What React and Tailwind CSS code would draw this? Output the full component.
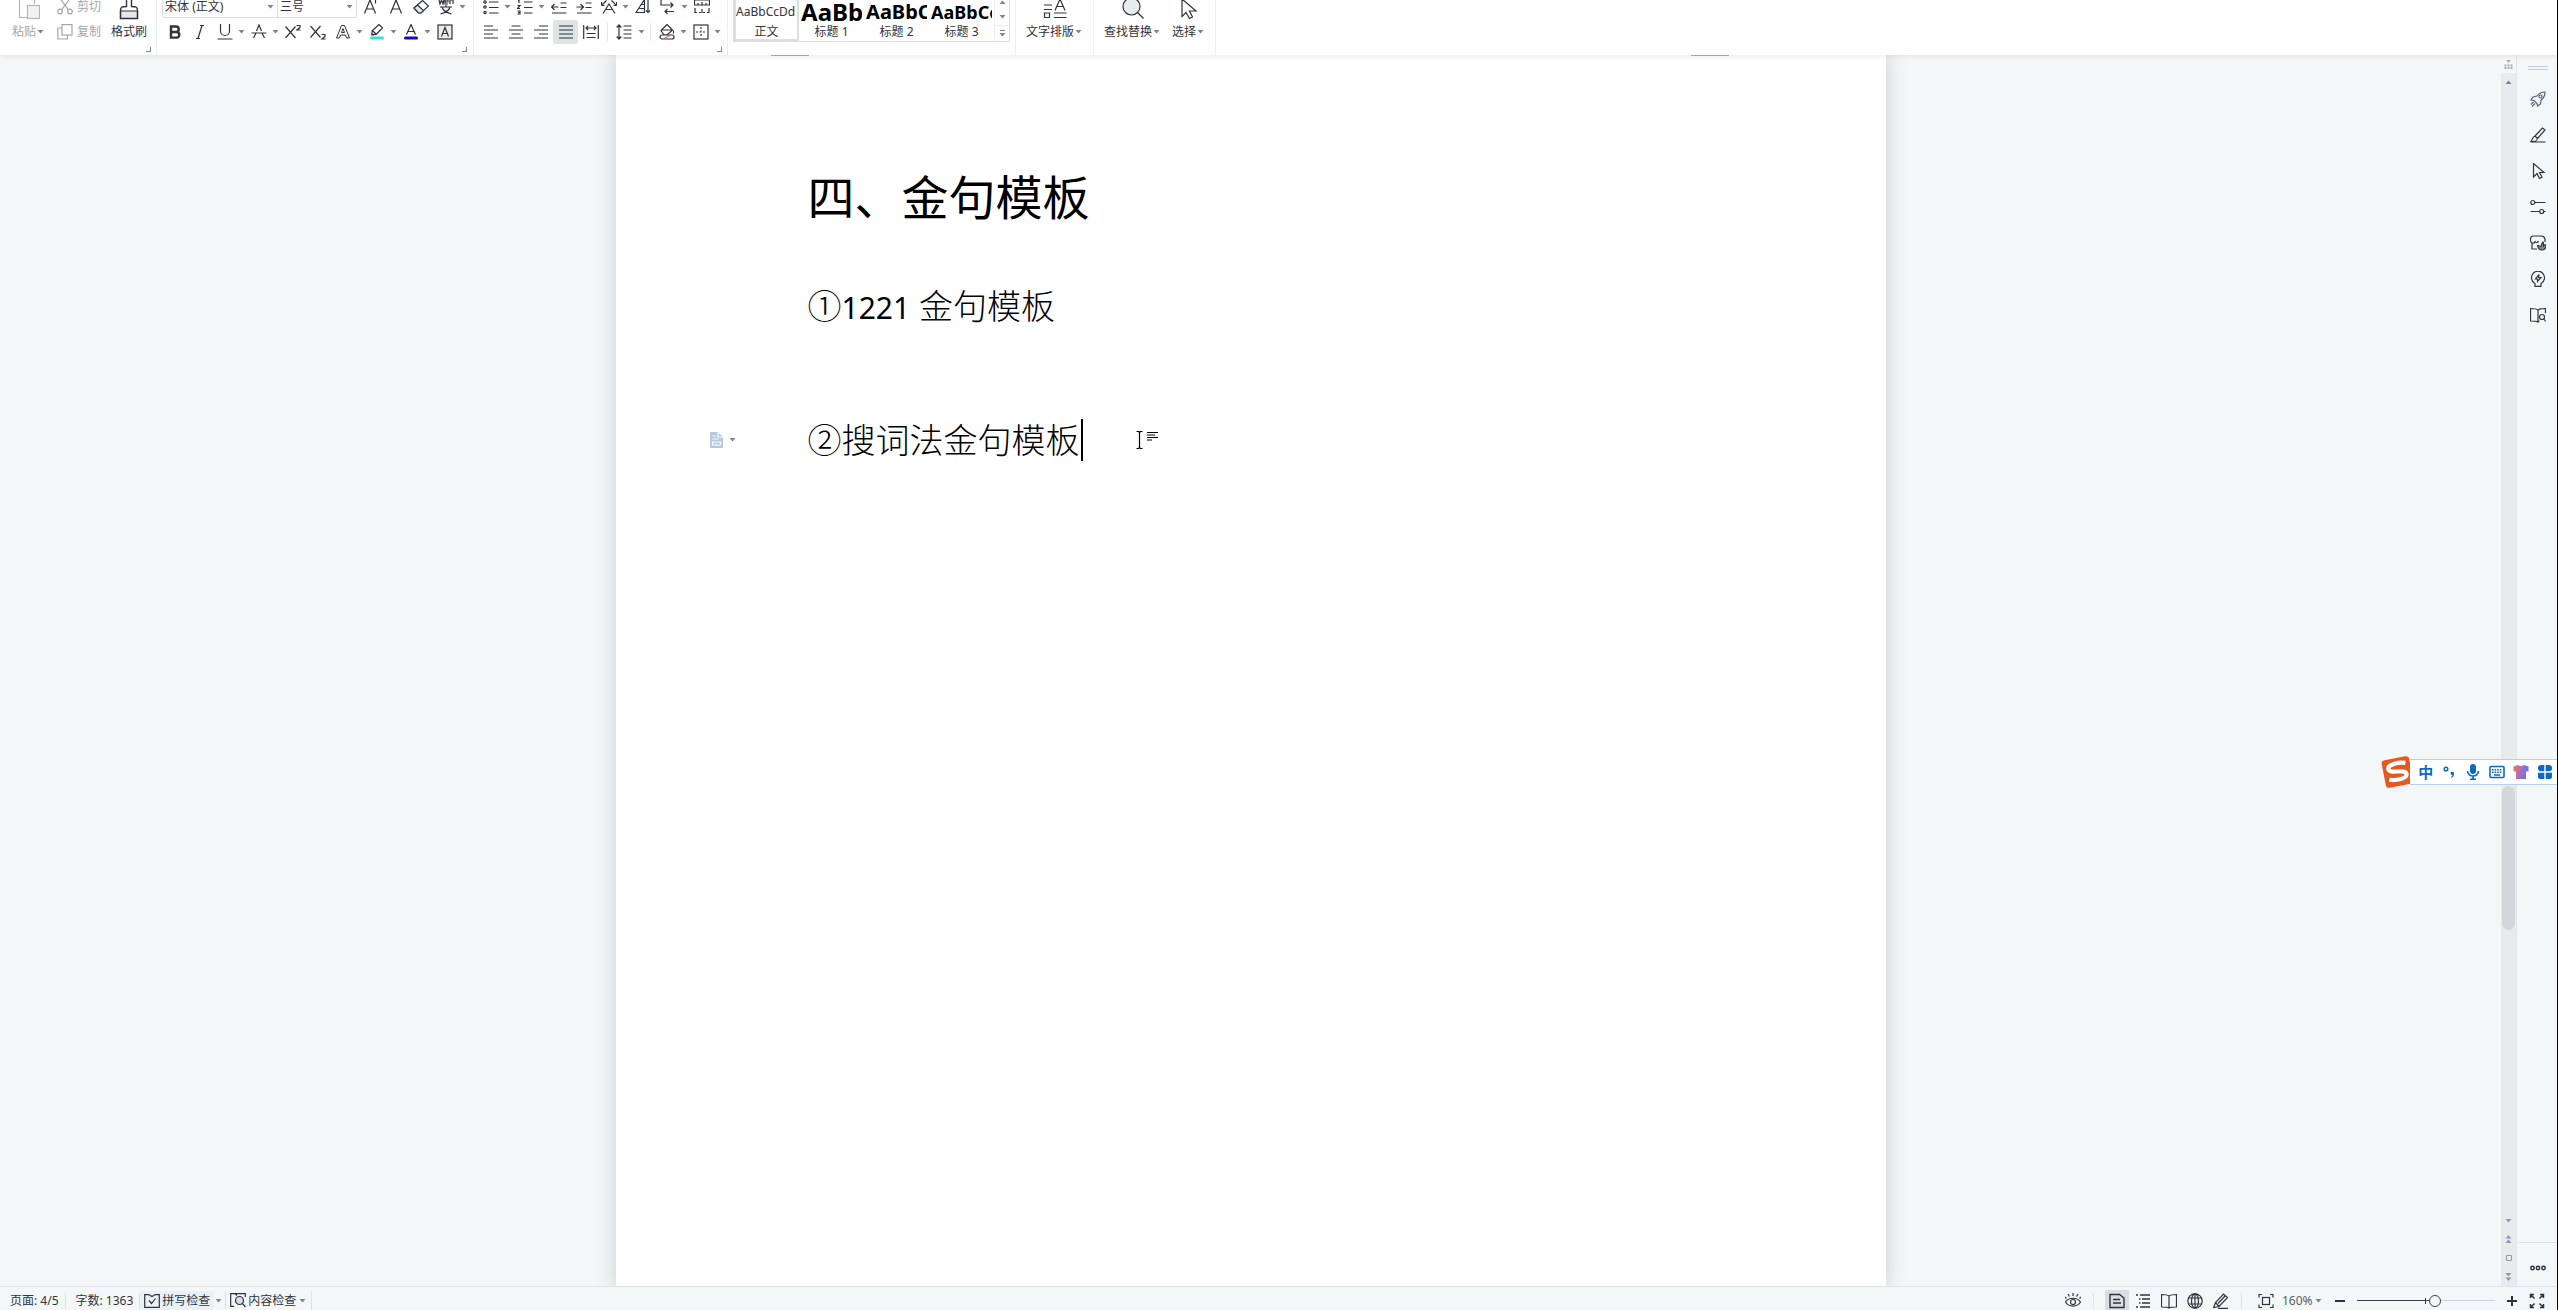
import { useState } from "react";

const INK = "#2f333d";

function Icon({ w = 16, h = 16, color = INK, children, className = "" }) {
  return (
    <svg
      width={w}
      height={h}
      viewBox={`0 0 ${w} ${h}`}
      fill="none"
      stroke={color}
      strokeWidth="1.2"
      className={`shrink-0 ${className}`}
      aria-hidden="true"
    >
      {children}
    </svg>
  );
}

function Caret({ className = "" }) {
  return (
    <svg width="9" height="4" viewBox="0 0 9 4" fill="#7d8390" className={`shrink-0 ${className}`} aria-hidden="true">
      <path d="M1.5 0h6l-3 3.5z" />
    </svg>
  );
}

/* Small ribbon button: icon cell, with a caret when it opens a menu */
function Tool({ label, menu, active, children }) {
  return (
    <button type="button" title={label} aria-label={label} className="flex h-[25px] shrink-0 items-center">
      <span className={`flex h-6 w-[25px] items-center justify-center rounded-xs ${active ? "bg-[#dfe4e7]" : ""}`}>
        {children}
      </span>
      {menu && <Caret />}
    </button>
  );
}

function BigTool({ label, menu, muted, children }) {
  return (
    <button type="button" className="flex shrink-0 flex-col items-center gap-1 pb-1">
      {children}
      <span className={`flex items-center text-xs leading-4 whitespace-nowrap ${muted ? "text-[#a3a7ae]" : ""}`}>
        {label}
        {menu && <Caret />}
      </span>
    </button>
  );
}

function Group({ launcher, className = "", children }) {
  return (
    <div className={`flex shrink-0 flex-col justify-end border-r border-[#eceff1] ${className}`}>
      <div className="flex h-[50px] items-end">{children}</div>
      <div className="flex h-[11px] items-start justify-end pt-[3px]">
        {launcher && <button type="button" aria-label="更多设置" className="size-[5px] border-r border-b border-[#7d8390]" />}
      </div>
    </div>
  );
}

function Divider() {
  return <span className="mx-1 h-[18px] w-px bg-[#e3e6e9]" />;
}

function ClipboardGroup() {
  return (
    <Group launcher className="pr-[5px] pl-3">
      <BigTool label="粘贴" menu muted>
        <Icon w={22} h={24} color="#b3b6bb">
          <path d="M9 21.5H1.5V3.5H16.5V8" />
          <rect x="9.5" y="9.5" width="12" height="13" fill="#f1f2f3" />
        </Icon>
      </BigTool>
      <div className="ml-[7px] flex flex-col text-xs text-[#a3a7ae]">
        <button type="button" className="flex h-[25px] items-center">
          <span className="flex w-[25px] justify-center">
            <Icon color="#a3a7ae">
              <circle cx="3" cy="12.5" r="2.3" />
              <circle cx="13" cy="12.5" r="2.3" />
              <path d="M4.5 10.8 12 1M11.5 10.8 4 1" />
            </Icon>
          </span>
          剪切
        </button>
        <button type="button" className="flex h-[25px] items-center">
          <span className="flex w-[25px] justify-center">
            <Icon color="#a3a7ae">
              <rect x="5" y=".6" width="10" height="10.5" />
              <path d="M5 4H.8V15H10.5V11" />
            </Icon>
          </span>
          复制
        </button>
      </div>
      <div className="mr-1 pl-[10px]">
        <BigTool label="格式刷">
          <Icon w={20} h={24}>
            <path d="M1.5 15h17v7.5h-17z" fill="#e6e9ec" />
            <path d="M1.5 15c0-4 1-4.5 6-4.5V1h5v9.500c5 0 6 .5 6 4.500v7.500h-17z" strokeWidth="1.4" />
          </Icon>
        </BigTool>
      </div>
    </Group>
  );
}

function FontGroup() {
  const [font, setFont] = useState("宋体 (正文)");
  const [size, setSize] = useState("三号");

  return (
    <Group launcher className="pr-[6px] pl-[5px]">
      <div className="flex flex-col">
        <div className="flex h-[25px] items-center">
          <div className="mr-px flex h-[22px] rounded-xs border border-[#dcdfe2] text-xs">
            <label className="relative flex w-[115px] items-center border-r border-[#dcdfe2]">
              <select
                aria-label="字体"
                value={font}
                onChange={(e) => setFont(e.target.value)}
                className="w-full appearance-none bg-transparent pl-0.5 leading-5 outline-none"
              >
                <option>宋体 (正文)</option>
                <option>黑体</option>
              </select>
              <Caret className="absolute right-0.5" />
            </label>
            <label className="relative flex w-[78px] items-center">
              <select
                aria-label="字号"
                value={size}
                onChange={(e) => setSize(e.target.value)}
                className="w-full appearance-none bg-transparent pl-0.5 leading-5 outline-none"
              >
                <option>三号</option>
                <option>四号</option>
              </select>
              <Caret className="absolute right-0.5" />
            </label>
          </div>
          <Tool label="增大字号">
            <Icon>
              <path d="M1.5 14.5 7 1l5.5 13.500M3.500 10h7M12.500 1v3.500" />
            </Icon>
          </Tool>
          <Tool label="减小字号">
            <Icon>
              <path d="M2.5 14.5 8 1l5.5 13.500M4.500 10h7" />
            </Icon>
          </Tool>
          <Tool label="清除格式">
            <Icon>
              <path d="m1 9 8.5-7.5 6 5.5L8 14H5.5z" />
              <path d="m4.5 6 6 5.5L8 14H5.5L1 9z" fill="#e3e6e9" />
            </Icon>
          </Tool>
          <Tool label="拼音指南" menu>
            <Icon>
              <path d="m1 1 1 4 1.5-4L5 5l1-4M7 3h3V1H7v4h3M12 5V1h3v4M2 8h12M8 6v2M12 8c-1 4-4 5.500-9.500 7M4 8c1 4 4 5.500 9.500 7" />
            </Icon>
          </Tool>
        </div>
        <div className="flex h-[25px] items-center">
          <Tool label="加粗">
            <Icon>
              <path d="M4 2.5h5a2.700 2.700 0 0 1 0 5.500H4zM4 8h5.500a2.800 2.800 0 0 1 0 5.600H4z" strokeWidth="2.4" />
            </Icon>
          </Tool>
          <Tool label="倾斜">
            <Icon>
              <path d="M8 1.5h4M4 14.5h4M10 1.5 6 14.5" />
            </Icon>
          </Tool>
          <Tool label="下划线" menu>
            <Icon>
              <path d="M3.5 0v7a4.500 4.500 0 0 0 9 0V0M.5 15h15" />
            </Icon>
          </Tool>
          <Tool label="删除线" menu>
            <Icon>
              <path d="M2.5 14 5 9M13.5 14 11 9M5.500 7 8 1l2.500 6M.5 9h15" />
            </Icon>
          </Tool>
          <Tool label="上标">
            <Icon>
              <path d="m.5 2.5 10 11.500M10.500 2.500.5 14M11.500 1.500h3.500v2l-3 2.500h3.500" />
            </Icon>
          </Tool>
          <Tool label="下标">
            <Icon>
              <path d="m.5 2 10 11.500M10.500 2 .5 13.500M11.500 10.500h3.500v2l-3 2.500h3.500" />
            </Icon>
          </Tool>
          <Tool label="文字效果" menu>
            <Icon>
              <path d="M1.5 14 6.500 1.500h3l5 12.500h-3l-1-3h-5l-1 3zM6.500 8.500 8 4.500l1.500 4z" strokeWidth="1" />
            </Icon>
          </Tool>
          <Tool label="突出显示" menu>
            <Icon>
              <path d="M3 10V7l7-6.500L13.500 4 7 10.500zM4 7l3 3M2 11h3" />
              <path d="M2.500 14h11" stroke="#2ce5e2" strokeWidth="3" strokeLinecap="round" />
            </Icon>
          </Tool>
          <Tool label="字体颜色" menu>
            <Icon>
              <path d="M3.500 10.500 8 .5l4.500 10M5 7.500h6" />
              <path d="M2.500 14h11" stroke="#1507cf" strokeWidth="3" strokeLinecap="round" />
            </Icon>
          </Tool>
          <Tool label="字符底纹">
            <Icon>
              <rect x="1" y="1" width="14" height="14" fill="#e9ebed" />
              <path d="M4.500 12.500 8 3.500l3.500 9M5.500 9.500h5" />
            </Icon>
          </Tool>
        </div>
      </div>
    </Group>
  );
}

function ParagraphGroup() {
  return (
    <Group launcher className="pr-[5px] pl-1">
      <div className="flex w-[244px] flex-col">
        <div className="flex h-[25px] items-center">
          <Tool label="项目符号" menu>
            <Icon>
              <circle cx="2" cy="3" r="1.200" />
              <circle cx="2" cy="8" r="1.200" />
              <circle cx="2" cy="13.500" r="1.200" />
              <path d="M6 3h9.500M6 8.500h9.500M6 14h9.500" />
            </Icon>
          </Tool>
          <Tool label="编号" menu>
            <Icon>
              <path d="M1 1.500h1V4M.5 6.500h2.500L.5 9.500H3M.5 12h2.500v3H.5M1 13.500h2M7 3h8.500M7 8.500h8.500M7 14h8.500" />
            </Icon>
          </Tool>
          <Tool label="减少缩进量">
            <Icon>
              <path d="M.5 8h7M3.500 5 .5 8l3 3M9.500 4h6M9.500 8.500h6M1 14h14.500" />
            </Icon>
          </Tool>
          <Tool label="增加缩进量">
            <Icon>
              <path d="M.5 8h7M4.500 5l3 3-3 3M9.500 4h6M9.500 8.500h6M1 14h14.500" />
            </Icon>
          </Tool>
          <Tool label="中文版式" menu>
            <Icon>
              <path d="M.5 6.500V3M.5 6.500h3M15.500 6.500V3M15.500 6.500h-3M.5 6.500l5-5M15.500 6.500l-5-5M2 14.500 8 5l6 9.500M5 10.500h6" />
            </Icon>
          </Tool>
          <Tool label="排序">
            <Icon>
              <path d="M1 13.500 9.500.5v13zM4.500 9.500h5M6.500 5.500h3M13 1v12.500M11 11.500l2 2 2-2" />
            </Icon>
          </Tool>
          <Tool label="制表位" menu>
            <Icon>
              <path d="M1 0v6h12M10.500 3.500 13 6l-2.500 2.500M14 12.500H5M7.500 10 5 12.500 7.500 15" />
            </Icon>
          </Tool>
          <Tool label="显示标尺">
            <Icon>
              <path d="M.5 1h15v5H.5zM4 4v2M8 3v3M12 4v2M1 9v5M5 13.500h2M9 13.500h2M15 9v5M8 10v4M1 13.500h2M13 13.500h2" />
            </Icon>
          </Tool>
        </div>
        <div className="flex h-[25px] items-center">
          <Tool label="左对齐">
            <Icon>
              <path d="M1 2h9M1 6h14M1 10h9M1 14h14" />
            </Icon>
          </Tool>
          <Tool label="居中对齐">
            <Icon>
              <path d="M3.500 2h9M1 6h14M3.500 10h9M1 14h14" />
            </Icon>
          </Tool>
          <Tool label="右对齐">
            <Icon>
              <path d="M6 2h9M1 6h14M6 10h9M1 14h14" />
            </Icon>
          </Tool>
          <Tool label="两端对齐" active>
            <Icon>
              <path d="M1 2h14M1 6h14M1 10h14M1 14h14" />
            </Icon>
          </Tool>
          <Tool label="分散对齐">
            <Icon>
              <path d="M.7 1v14M15.300 1v14M3 4h10M5 2 3 4l2 2M11 2l2 2-2 2M3.500 9.500h9M3.500 13.500h9" />
            </Icon>
          </Tool>
          <Divider />
          <Tool label="行距" menu>
            <Icon>
              <path d="M3 1v14M.7 3.500 3 1l2.300 2.500M.7 12.500 3 15l2.300-2.500M7.500 2h8M7.500 6h8M7.500 10h8M7.500 14h8" />
            </Icon>
          </Tool>
          <Divider />
          <Tool label="底纹颜色" menu>
            <Icon>
              <path d="M2 6.500 8 .5l5.500 5.500L8 11H5zM2.500 6h10M14.500 6.500v3" />
              <rect x="1" y="11" width="14" height="4" rx="2" fill="#fff" />
              <path d="m5 14.500 6-3" stroke="#d76a6a" />
            </Icon>
          </Tool>
          <Tool label="边框" menu>
            <Icon>
              <rect x="1" y="1" width="14" height="14" />
              <path d="M8 3v10M3 8h10" strokeDasharray="2 1.500" />
            </Icon>
          </Tool>
        </div>
      </div>
    </Group>
  );
}

const styles = [
  { name: "正文", sample: "AaBbCcDd", look: "text-xs", active: true },
  { name: "标题 1", sample: "AaBb", look: "text-2xl font-bold text-black" },
  { name: "标题 2", sample: "AaBbC", look: "text-xl font-bold text-black" },
  { name: "标题 3", sample: "AaBbCc", look: "text-lg font-bold text-black" },
];

function StylesGroup() {
  return (
    <Group className="pr-[5px] pl-[5px]">
      <div className="mb-0.5 flex h-12 border border-[#dcdfe2]">
        {styles.map((s) => (
          <button
            key={s.name}
            type="button"
            className={`flex w-[65px] flex-col justify-end border-2 ${s.active ? "border-[#dcdfe2]" : "border-transparent"}`}
          >
            <span className={`flex h-6 w-full items-center overflow-hidden leading-6 whitespace-nowrap ${s.look}`}>
              {s.sample}
            </span>
            <span className="h-[15px] w-full text-center text-xs leading-4">{s.name}</span>
          </button>
        ))}
        <div className="flex w-[15px] flex-col border-l border-[#eceff1]">
          <button type="button" aria-label="上一行" className="flex h-[14px] items-center justify-center">
            <Caret className="rotate-180" />
          </button>
          <button type="button" aria-label="下一行" className="flex h-[17px] items-center justify-center">
            <Caret />
          </button>
          <button
            type="button"
            aria-label="展开样式"
            className="flex h-4 flex-col items-center justify-center gap-0.5 border-t border-[#eceff1]"
          >
            <span className="h-px w-[5px] bg-[#7d8390]" />
            <Caret />
          </button>
        </div>
      </div>
    </Group>
  );
}

function Ribbon() {
  return (
    <header className="relative z-10 bg-white shadow-[0_1px_5px_#00000018]">
      <div className="flex h-[55px] items-end overflow-hidden">
        <ClipboardGroup />
        <FontGroup />
        <ParagraphGroup />
        <StylesGroup />
        <Group className="px-[10px]">
          <BigTool label="文字排版" menu>
            <Icon w={24} h={24}>
              <path d="M1 9h8M1 13.500h8M1.500 17h5v4.500h-5zM12 14.500 17 3l5 11.500M14 10.500h6M11 17h12.500M11 21.500h12.500" />
            </Icon>
          </BigTool>
        </Group>
        <Group className="px-[10px]">
          <BigTool label="查找替换" menu>
            <Icon w={24} h={24}>
              <circle cx="10.500" cy="10.500" r="8.500" fill="#e9ebed" />
              <path d="m16.500 16.500 6 6" />
            </Icon>
          </BigTool>
          <div className="pl-[11px]">
            <BigTool label="选择" menu>
              <Icon w={18} h={24}>
                <path d="M2 3v17.500l4-4 3.500 6 3-1.500-3-6H16z" />
              </Icon>
            </BigTool>
          </div>
        </Group>
      </div>
    </header>
  );
}

function Document() {
  return (
    <main className="min-w-0 flex-1 overflow-hidden">
      <article className="relative mx-auto h-full w-[1270px] bg-white pt-[110px] pl-48 text-black shadow-[0_0_18px_2px_#cfd3d5]">
        <div className="absolute inset-x-0 top-0 flex justify-between pr-[157px] pl-[155px]">
          <span className="h-px w-[38px] bg-[#a9adb0]" />
          <span className="h-px w-[38px] bg-[#a9adb0]" />
        </div>
        <h1 className="text-[47px] leading-[64px] font-normal">四、金句模板</h1>
        <p className="mt-[55px] text-[34px] leading-[44px] font-light">
          ①<span className="text-[30px] font-normal">1221</span> 金句模板
        </p>
        <div className="relative mt-[88px] flex items-center text-[34px] leading-[44px] font-light">
          <button type="button" aria-label="段落布局" className="absolute -left-[98px] flex items-center gap-[5px]">
            <Icon w={13} h={16} color="#fff">
              <path d="M0 0h8l5 5v11H0z" fill="#b5c9e3" stroke="none" />
              <path d="M8 0v5h5M2.500 4h3.500M2.500 7h6M2.500 10h8v3h-8z" />
            </Icon>
            <Caret />
          </button>
          <p>②搜词法金句模板</p>
          <span className="ml-px h-[42px] w-0.5 bg-black" />
          <Icon w={22} h={18} color="#000" className="absolute left-[328px]">
            <path d="M.5.5h2l1 1 1-1h2M3.500 1.500v15M.5 17.500h2l1-1 1 1h2M11 1.500h11M11 4h8M11 6.500h11M11 9h5" />
          </Icon>
        </div>
      </article>
    </main>
  );
}

function ScrollBar() {
  return (
    <div className="flex w-[15px] shrink-0 flex-col items-center bg-[#e8ebee]">
      <div className="flex h-[18px] w-full items-center justify-center bg-[#f4f7f8]">
        <Icon w={9} h={9} color="#a9adba">
          <path d="M2 0h5L4.500 3z" fill="#a9adba" stroke="none" />
          <path d="M.5 5.500h8M.5 8h8" strokeWidth="2" strokeDasharray="2 1" />
        </Icon>
      </div>
      <button type="button" aria-label="向上滚动" className="flex h-[18px] items-center">
        <Caret className="rotate-180" />
      </button>
      <div className="flex w-full flex-1 flex-col items-center">
        <div className="flex-[696]" />
        <div className="w-[13px] flex-[144] rounded-full bg-[#d3d7db]" />
        <div className="flex-[281]" />
      </div>
      <div className="flex h-[75px] flex-col items-center gap-3 pt-2">
        <button type="button" aria-label="向下滚动">
          <Icon w={9} h={4}>
            <path d="M1.500 0h6L4.500 3.500z" fill="#9297a6" stroke="none" />
          </Icon>
        </button>
        <button type="button" aria-label="上一页">
          <Icon w={9} h={8}>
            <path d="M1.500 3.500h6L4.500 0zM1.500 8h6L4.500 4.500z" fill="#9297a6" stroke="none" />
          </Icon>
        </button>
        <button type="button" aria-label="选择浏览对象" className="size-1.5 rounded-[1px] border border-[#9297a6]" />
        <button type="button" aria-label="下一页">
          <Icon w={9} h={8}>
            <path d="M1.500 0h6L4.500 3.500zM1.500 4.500h6L4.500 8z" fill="#9297a6" stroke="none" />
          </Icon>
        </button>
      </div>
    </div>
  );
}

const sideTools = [
  {
    label: "快捷工具",
    color: "#59627a",
    art: (
      <>
        <path d="M15 1c-4 0-6 1-8 4L3 6 1 9l3 .5 3 3L7.500 15l3-2 .5-4c3-2 4-4 4-8z" />
        <circle cx="10.500" cy="5.500" r="1.500" />
        <path d="M3.500 11 1 13.500M5 12.500 2 15.500" />
      </>
    ),
  },
  {
    label: "样式和格式",
    art: <path d="m5 9 7.500-8 2.500 2-7.500 8.500M5 9l2.500 2.500C7 14 4 15 1 14.500 2.500 13 2 10 5 9zM.5 15h15" />,
  },
  { label: "选择窗格", art: <path d="M3.500.5v13.500l3.500-3.500 2.500 5 2.500-1.500-2.500-4.500h4.500z" /> },
  {
    label: "属性",
    art: (
      <>
        <circle cx="2.800" cy="3.500" r="2" />
        <path d="M5 3.500h10.500M.5 12.500h9M14 12.500h1.500" />
        <circle cx="11.700" cy="12.500" r="2" />
      </>
    ),
  },
  {
    label: "资源库",
    art: (
      <>
        <path d="M7 14H2V8M2 8C0 7 .5 5 .5 4c0-2 1-3 3-3h8c2 0 3 1 3.500 3v3M2 8c1.500.5 3 0 3-2 0 2 3 2 3.500 0" />
        <path d="M12 15c-3 0-4-2-4.500-4.500 2 0 3 .5 3.500 1.500 0-2 .5-3.500 2-5 1 1.500.5 3 .5 4 1-1 1.500-1.500 2.500-1.500 0 3.500-1.500 5.500-3.500 5.500z" fill="#888c93" />
      </>
    ),
  },
  {
    label: "帮助中心",
    art: <path d="M5 12.500A6.500 6.500 0 1 1 11 12.500V15.300H5zM9 3.500 5.500 8h2v2.500L11 6.500H8.500z" />,
  },
  {
    label: "文档查找",
    art: (
      <>
        <path d="M8 3C6 1.500 3 1.500.5 1.500v12.500c3 0 6 0 7.500 1V3c2-1.500 5-1.500 7.500-1.500V6M8 15c.5-.5 1-1 1.500-1" />
        <circle cx="12" cy="10" r="2.500" />
        <path d="m14 12 1.500 2.500" />
      </>
    ),
  },
];

function SidePanel() {
  return (
    <aside className="flex w-[41px] shrink-0 flex-col items-center border-l border-[#e1e5e8] pl-px">
      <div className="mt-[11px] mb-[11px] h-1 w-5 border-y border-[#c9cdd1]" />
      <nav className="flex flex-col">
        {sideTools.map((tool) => (
          <button
            key={tool.label}
            type="button"
            title={tool.label}
            aria-label={tool.label}
            className="flex size-9 items-center justify-center"
          >
            <Icon color={tool.color}>{tool.art}</Icon>
          </button>
        ))}
      </nav>
      <button
        type="button"
        aria-label="更多"
        className="mt-auto flex h-11 w-full items-center justify-center border-t border-[#dde1e4] pt-1.5"
      >
        <Icon w={16} h={6} className="[stroke-width:1.5]">
          <circle cx="2.500" cy="3" r="1.700" />
          <circle cx="8" cy="3" r="1.700" />
          <circle cx="13.500" cy="3" r="1.700" />
        </Icon>
      </button>
    </aside>
  );
}

/* Floating input method bar */
function ImeBar() {
  return (
    <div className="absolute top-[756px] right-0 z-20 flex items-center">
      <svg width="33" height="32" viewBox="0 0 33 32" aria-hidden="true">
        <g transform="rotate(-11 16.500 16)">
          <rect x="2.500" y="2" width="28" height="28" rx="3.500" fill="#e8571f" />
          <path
            d="M26 8.500C19 6 8 7 8 11.500c0 5.500 17 2.500 17 8 0 5-12 5-18 2.500"
            fill="none"
            stroke="#fff"
            strokeWidth="4.200"
          />
        </g>
      </svg>
      <div className="-ml-1 flex h-[26px] w-[147px] items-center border-y border-[#b9cfe8] bg-white pl-1 text-[#0b69c7]">
        <button type="button" className="w-6 text-center text-[15px] leading-6 font-bold">
          中
        </button>
        <button type="button" aria-label="标点" className="flex w-6 justify-center">
          <Icon w={14} h={14} color="#0b69c7">
            <circle cx="4" cy="4" r="1.800" strokeWidth="1.500" />
            <path d="M8.500 8a1.800 1.800 0 1 1 3.500 1c0 2-1 3-2.500 4l-.5-1c1-.5 1.300-1 1.300-2-1 0-1.800-1-1.800-2z" fill="#0b69c7" stroke="none" />
          </Icon>
        </button>
        <button type="button" aria-label="语音" className="flex w-[25px] justify-center">
          <Icon w={14} h={16} color="#0b69c7">
            <rect x="4" y="0" width="6" height="10" rx="3" fill="#0b69c7" stroke="none" />
            <path d="M1.500 7a5.500 5 0 0 0 11 0M7 12v3M4 15.200h6" strokeWidth="1.600" />
          </Icon>
        </button>
        <button type="button" aria-label="软键盘" className="flex w-6 justify-center">
          <Icon w={16} h={14} color="#0b69c7">
            <rect x="1" y="1.500" width="14" height="11" rx="1" strokeWidth="1.600" />
            <path d="M3 4.800h10M3 7.300h10" strokeWidth="1.500" strokeDasharray="1.600 1" />
            <path d="M5 10h6" strokeWidth="1.500" />
          </Icon>
        </button>
        <button type="button" aria-label="皮肤" className="flex w-[25px] justify-center">
          <svg width="16" height="16" viewBox="0 0 16 16" aria-hidden="true">
            <defs>
              <linearGradient id="skin" x1="0" x2="1" y1=".5" y2=".8">
                <stop offset="0" stopColor="#e6746a" />
                <stop offset=".5" stopColor="#a06bd0" />
                <stop offset="1" stopColor="#4f7df0" />
              </linearGradient>
            </defs>
            <path d="M5 1c1.500 1.500 4.500 1.500 6 0l4.500 1.500v5H13V15H3V7.500H.5v-5z" fill="url(#skin)" />
          </svg>
        </button>
        <button type="button" aria-label="工具箱" className="flex w-6 justify-center">
          <Icon w={14} h={14}>
            <path
              d="M3 0h3.300v6.300H3a3 3 0 0 1 0-6.300zM7.700 0H11a3 3 0 0 1 0 6.300H7.700zM0 7.700h6.300V14H2a2 2 0 0 1-2-2zM7.700 7.700H14V12a2 2 0 0 1-2 2H7.700z"
              fill="#0b69c7"
              stroke="none"
            />
          </Icon>
        </button>
      </div>
    </div>
  );
}

function ViewButton({ label, active, children }) {
  return (
    <button
      type="button"
      title={label}
      aria-label={label}
      className={`mr-0.5 flex h-[22px] w-6 items-center justify-center ${active ? "bg-[#dadee3]" : ""}`}
    >
      {children}
    </button>
  );
}

function StatusBar() {
  const [zoom, setZoom] = useState(57);

  return (
    <footer className="flex h-6 shrink-0 items-center justify-between border-t border-[#dfe3e6] pt-1 text-xs whitespace-nowrap">
      <div className="flex h-full items-center">
        <span className="flex h-4 items-center border-r border-[#dfe3e6] pr-1.5 pl-2.5">页面: 4/5</span>
        <span className="flex h-4 items-center border-r border-[#dfe3e6] pr-1.5 pl-2.5">字数: 1363</span>
        <button type="button" className="flex h-full items-center">
          <span className="flex h-full items-center gap-0.5 bg-[#e9f1f8] px-1">
            <Icon w={16} h={14}>
              <path d="M5 .7H.7v12.600H15.300V.7H11M5 .7l3 1.800L11 .7M5 6.500l2.500 3 4-5" />
            </Icon>
            拼写检查
          </span>
          <Caret />
        </button>
        <button type="button" className="ml-0.5 flex h-full items-center gap-0.5 border-x border-[#dfe3e6] px-1">
          <Icon>
            <path d="M4 13.300H.7V.7H15.300V4" />
            <circle cx="9.500" cy="7.500" r="4" fill="#d9dde1" />
            <path d="m12.500 10.500 3 3.500M5 .7 7 2.500" />
          </Icon>
          内容检查
          <Caret />
        </button>
      </div>
      <div className="flex h-full items-center pr-3">
        <button type="button" aria-label="护眼模式" className="mr-3 flex">
          <Icon>
            <path d="M.5 9C4 4 12 4 15.500 9 12 14.500 4 14.500.5 9zM8 0v3M3 1l1.500 2.500M13 1l-1.500 2.500M0 4l1.500 1.500M16 4l-1.500 1.500" />
            <circle cx="8" cy="9" r="2.500" />
          </Icon>
        </button>
        <span className="mr-[11px] h-4 w-px bg-[#dfe3e6]" />
        <ViewButton label="页面视图" active>
          <Icon>
            <path d="M1 1.500h9.500L15 5v9.500H1zM4 6.500h7M4 10h8" strokeWidth="1.400" />
          </Icon>
        </ViewButton>
        <ViewButton label="大纲">
          <Icon>
            <path d="M1 2h2M5 2h10M4 6h1.500M7 6h8M4 10h1.500M7 10h8M1 14h2M5 14h10" strokeWidth="1.400" />
          </Icon>
        </ViewButton>
        <ViewButton label="阅读版式">
          <Icon>
            <path d="M8 3C6 1.500 3 1.500.5 1.500v12.500c3 0 6 0 7.500 1 1.500-1 4.500-1 7.500-1V1.500C13 1.500 10 1.500 8 3zM8 3v12" />
          </Icon>
        </ViewButton>
        <ViewButton label="Web版式">
          <Icon>
            <circle cx="8" cy="8" r="7.200" />
            <ellipse cx="8" cy="8" rx="3.500" ry="7.200" />
            <path d="M1.500 5h13M1.500 11h13M8 1v14" />
          </Icon>
        </ViewButton>
        <ViewButton label="写作模式">
          <Icon>
            <path d="M.7 14.500 2.500 9.500 10.500 1l4 3.500-8.500 9zM2.500 9.500 6 13.500M5 10.500l7-7.500M5 15.300h10" />
          </Icon>
        </ViewButton>
        <span className="mr-4 ml-1.5 h-4 w-px bg-[#dfe3e6]" />
        <button type="button" aria-label="最佳显示比例" className="mr-1.5 flex">
          <Icon>
            <rect x="4.500" y="4.500" width="7" height="7" />
            <path d="M1 4.500V1.500h3M12 1.500h3v3M15 11.500v3h-3M4 14.500H1v-3" />
          </Icon>
        </button>
        <label className="relative mr-2.5 flex w-[45px] items-center">
          <select
            aria-label="显示比例"
            defaultValue="160%"
            className="w-full appearance-none bg-transparent pl-0.5 text-xs leading-4 text-[#5b6069] outline-none"
          >
            <option>100%</option>
            <option>160%</option>
          </select>
          <Caret className="absolute right-0.5" />
        </label>
        <button type="button" aria-label="缩小" className="h-0.5 w-2.5 bg-[#2f333d]" onClick={() => setZoom(zoom - 5)} />
        <div className="relative mx-3 flex w-[138px] items-center">
          <span className="absolute left-[68px] h-1.5 w-px bg-[#2f333d]" />
          <input
            type="range"
            aria-label="缩放滑块"
            value={zoom}
            onChange={(e) => setZoom(Number(e.target.value))}
            className="h-px w-full appearance-none bg-[linear-gradient(90deg,#3c404a_54%,#cdd1d5_54%)] [&::-webkit-slider-thumb]:size-3 [&::-webkit-slider-thumb]:appearance-none [&::-webkit-slider-thumb]:rounded-full [&::-webkit-slider-thumb]:border [&::-webkit-slider-thumb]:border-[#3c404a] [&::-webkit-slider-thumb]:bg-[#f4f7f8]"
          />
        </div>
        <button type="button" aria-label="放大" className="mr-3 flex" onClick={() => setZoom(zoom + 5)}>
          <Icon w={10} h={10}>
            <path d="M5 0v10M0 5h10" strokeWidth="2" />
          </Icon>
        </button>
        <button type="button" aria-label="全屏" className="flex">
          <Icon>
            <path d="M1.500 5V1.500H5M1.500 1.500 5.500 5.500M11 1.500h3.500V5M14.500 1.500l-4 4M14.500 11v3.500H11M14.500 14.500l-4-4M5 14.500H1.500V11M1.500 14.500l4-4" strokeWidth="1.500" />
          </Icon>
        </button>
      </div>
    </footer>
  );
}

export default function App() {
  return (
    <div className="relative flex h-screen flex-col overflow-hidden border-r border-black bg-[#f4f7f8] font-['Noto_Sans','Noto_Sans_CJK_SC',sans-serif] text-[#2f333d]">
      <Ribbon />
      <div className="flex min-h-0 flex-1">
        <Document />
        <ScrollBar />
        <SidePanel />
      </div>
      <ImeBar />
      <StatusBar />
    </div>
  );
}
